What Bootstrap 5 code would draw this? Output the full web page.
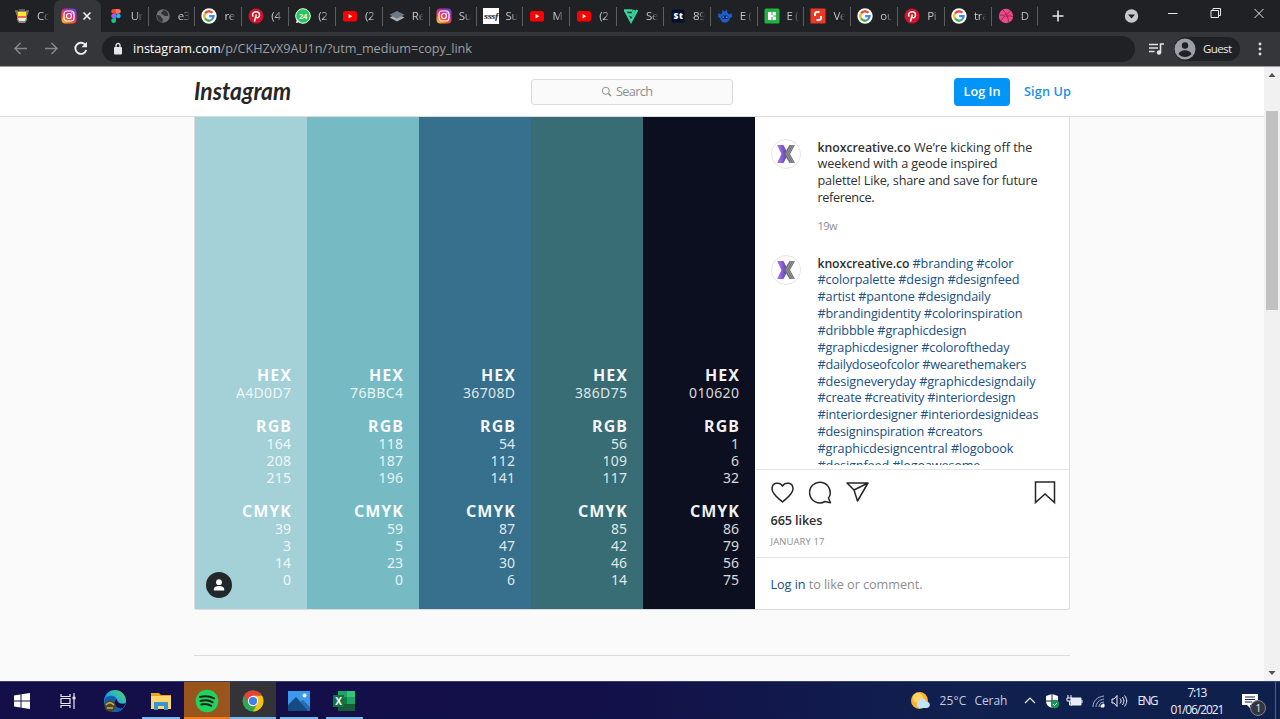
<!DOCTYPE html>
<html lang="en">
<head>
<meta charset="utf-8">
<title>Instagram</title>
<meta name="viewport" content="width=device-width, initial-scale=1">
<link rel="stylesheet" href="https://cdn.jsdelivr.net/npm/bootstrap@5.3.0/dist/css/bootstrap.min.css">
<style>
body{font-family:"Open Sans","Noto Sans",sans-serif;font-size:12.7px;color:#303030;width:1280px;height:719px;overflow:hidden;background:#fafafa}
svg{display:block;flex:none}
[data-fit]{white-space:nowrap;display:inline-block}
.tabstrip{height:32px;background:#202124;padding-left:7.6px;color:#c3c6ca;font-size:11.5px;letter-spacing:-.3px}
.tab{width:46.85px;height:32px;padding-left:6.5px;flex:none}
.tab .sep{width:1px;height:19px;background:#5c5e62;margin-left:-7px;margin-right:6px}
.tab .cut{width:12px;margin-left:7px;overflow:hidden;white-space:nowrap;-webkit-mask-image:linear-gradient(90deg,#000 45%,transparent)}
.tab.current{background:#35363a;border-radius:7px 7px 0 0}
.toolbar{height:34px;background:#35363a}
.omni{width:1033px;height:26px;border-radius:13px;background:#202124;color:#9aa0a6;font-size:12.7px;margin-left:12px;padding-left:13px}
.omni svg{margin:0 10px 0 -2px}
.queue{margin-left:13px}
.guest{width:66px;height:24px;border-radius:12px;background:#202124;color:#e8eaed;font-size:11.5px;margin-left:9px}
.viewport{height:615px;border-top:1px solid #9b9b9c}
.sheet{width:1264px}
.topnav{height:50px;background:#fff;border-bottom:1px solid #dbdbdb;padding-left:194px}
.searchbox{width:202px;height:26px;margin-left:240px;border:1px solid #dbdbdb;border-radius:3px;background:#fafafa;color:#8e8e8e;padding-right:10px}
.login{width:56px;height:28px;margin-left:221px;border-radius:4px;background:#0095f6;color:#fff;font-weight:600}
.signup{color:#1b8fe8;font-weight:600;margin-left:14px}
.post{width:876px;height:493px;margin-left:194px;border:1px solid #dbdbdb;border-top:0;border-radius:0 0 3px 3px;background:#fff}
.swatches{width:561px;height:492px;margin-left:-.5px}
.swatch{width:112px;flex:none;color:#fff;padding:249px 15.5px 0 0;text-align:right;line-height:17px;font-family:"Noto Sans","Open Sans",sans-serif;font-size:14px}
.swatch b{display:block;font-size:16px;font-weight:700;line-height:18px;color:#fffffff2}
.swatch div{color:#ffffffd9;margin-bottom:16px}
.tagged{width:26px;height:26px;left:11.5px;top:455px;background:#222829}
.comments{height:348px;overflow:hidden;padding-left:15px}
.lines{line-height:16.87px;margin-left:17px}
.lines .l{display:block;height:16.87px}
.lines b{font-weight:600;font-size:12.3px}
.lines .tags,.blue{color:#204f81}
.gray{color:#8e8e8e}
.rule{border-top:1px solid #e6e6e6}
.footerline{margin:45px 0 0 194px;width:876px;height:1px;background:#dbdbdb}
.scroller{width:16px;background:#f1f1f1}
.taskbar{height:38px;background:linear-gradient(90deg,#150f49 0,#130f48 45%,#10204f 75%,#10204c 100%);color:#eef;font-size:12px;border-top:1px solid #344070}
.task{width:45.8px;height:37px;flex:none}
.run::after{content:"";position:absolute;left:4px;right:4px;bottom:0;height:2px;background:#76b9ed}
.wide::after{left:0;right:0}
.orange::after{background:#f57c14}
.note{font-size:10px;width:16px;height:16px;right:-8px;bottom:-7px;background:#333640;border:1px solid #81858d;line-height:14px}
</style>
</head>
<body>
<svg width="0" height="0" class="position-absolute"><defs>
<linearGradient id="igg" x1="0.1" y1="1" x2=".8" y2="0"><stop offset="0" stop-color="#fec53a"/><stop offset=".35" stop-color="#f9532f"/><stop offset=".6" stop-color="#d52c8c"/><stop offset="1" stop-color="#6a3fd8"/></linearGradient>
<linearGradient id="edg" x1="0" y1="1" x2="1" y2="0"><stop offset="0" stop-color="#0c59b0"/><stop offset=".5" stop-color="#1ca9e0"/><stop offset="1" stop-color="#62d65a"/></linearGradient>
<linearGradient id="kx"><stop offset="0" stop-color="#b87be8"/><stop offset="1" stop-color="#4d3bb8"/></linearGradient>
<symbol id="ig" viewBox="0 0 16 16"><rect x=".5" y=".5" width="15" height="15" rx="4" fill="url(#igg)"/><rect x="3" y="3" width="10" height="10" rx="3" fill="none" stroke="#fff" stroke-width="1.200"/><circle cx="8" cy="8" r="2.500" fill="none" stroke="#fff" stroke-width="1.200"/><circle cx="11" cy="5" r=".7" fill="#fff"/></symbol>
<symbol id="yt" viewBox="0 0 16 16"><rect x="1" y="3" width="14" height="10.500" rx="2.600" fill="#f00"/><path d="M6.600 6v4.500l3.600-2.250z" fill="#fff"/></symbol>
<symbol id="gg" viewBox="0 0 16 16"><circle cx="8" cy="8" r="7.700" fill="#fff"/><g fill="none" stroke-width="2.200"><path d="M4 5.500A4.700 4.700 0 0 1 11.400 4.800" stroke="#ea4335"/><path d="M4 5.500a4.700 4.700 0 0 0 0 5" stroke="#fbbc05"/><path d="M4 10.500a4.700 4.700 0 0 0 7 1" stroke="#34a853"/><path d="M11 11.500a4.500 4.500 0 0 0 1.600-3.400H8.200" stroke="#4285f4"/></g></symbol>
<symbol id="pin" viewBox="0 0 16 16"><circle cx="8" cy="8" r="7.500" fill="#d3122b"/><path d="M6.400 13.500 8.300 6.500M5.200 8.600C3.500 6 5.600 3.700 8.200 3.700c4.500 0 4 6.100.9 6.100-.9 0-1.500-.5-1.600-1.100" fill="none" stroke="#fff" stroke-width="1.500"/></symbol>
<symbol id="cup" viewBox="0 0 16 16"><path d="M1 3h3M12 3h3M2 3l1 4M14 3l-1 4M5 2h6" stroke="#77736a" stroke-width="1.500" fill="none"/><path d="M3 3h10v9l-2 3H5l-2-3z" fill="#8c8773"/><path d="M4 4h8v4H4z" fill="#ffe629"/><path d="M4 8h8v2H4z" fill="#ef674e"/><path d="M4 10h8l-1 3H5z" fill="#e8efe4"/></symbol>
<symbol id="fig" viewBox="0 0 16 16"><path d="M8 1H5.500a2.300 2.300 0 0 0 0 4.700H8z" fill="#f24e1e"/><path d="M8 1h2.500a2.300 2.300 0 0 1 0 4.700H8z" fill="#ff7262"/><path d="M8 5.700H5.500a2.300 2.300 0 0 0 0 4.600H8z" fill="#a259ff"/><circle cx="10.400" cy="8" r="2.300" fill="#1abcfe"/><path d="M8 10.300H5.500A2.400 2.400 0 1 0 8 12.700z" fill="#0acf83"/></symbol>
<symbol id="globe" viewBox="0 0 16 16"><circle cx="8" cy="8" r="6.700" fill="#707276"/><path d="M2 7c3 0 4 1 4 2s2 1 2 3l-1 2C4 14 2 11 2 7M8 2c0 2-2 2-2 4 2 0 3 2 4 2h3c1-3-2-6-5-6" fill="#303236"/></symbol>
<symbol id="wa" viewBox="0 0 16 16"><circle cx="8" cy="8" r="7.300" fill="#25c95a" stroke="#f2fff4"/><path d="M1 15l1-4 3 3z" fill="#fff"/><text x="8" y="10.800" font-size="7.500" font-weight="700" text-anchor="middle" fill="#fff">24</text></symbol>
<symbol id="lay" viewBox="0 0 16 16"><path d="M.5 9.500 8 6l7.500 3.500L8 13.500z" fill="#aab0b4"/><path d="M.5 6.700 8 3l7.500 3.700L8 10.700z" fill="#6c7a86"/></symbol>
<symbol id="sss" viewBox="0 0 16 16"><path fill="#fff" d="M0 0h16v16H0z"/><path d="M1 8h14" stroke="#555" stroke-width=".6"/><text x="1" y="11" font-size="8.500" font-style="italic" font-weight="700" fill="#333" textLength="14" lengthAdjust="spacingAndGlyphs" font-family="Liberation Serif">sssf</text></symbol>
<symbol id="ft" viewBox="0 0 16 16" fill="none" stroke="#39d49c" stroke-width="2.300"><path d="M1 2.500h8.500M1.800 2 8 13.500 14.300 2M5 6.500h4.500M11.500 2 8 8.500"/></symbol>
<symbol id="st" viewBox="0 0 16 16"><rect x="1.500" y="1.500" width="13" height="13" rx="1.500" fill="#02102d"/><text x="8" y="11" font-size="8.500" font-weight="800" text-anchor="middle" fill="#fff" textLength="9">St</text></symbol>
<symbol id="bot" viewBox="0 0 16 16"><path d="M1.500 5 4 6.500 5.500 4 5 2l3 1.500L10 1.500V4l2 2.500L14.500 5l.5 4-2 1c-1 3-2 4.500-5 4.500S4 13 3 10L1 9z" fill="#1e5ed0"/><rect x="4.500" y="7.500" width="7" height="3.500" rx="1.700" fill="#0b2c66"/><circle cx="6.200" cy="9.200" r=".9" fill="#4e8bf0"/><circle cx="9.800" cy="9.200" r=".9" fill="#4e8bf0"/></symbol>
<symbol id="gr" viewBox="0 0 16 16"><rect x=".5" y=".5" width="15" height="15" rx="1.500" fill="#26b044"/><path d="M4 4h3.500v8H4zM8.500 4H12v3.500H8.500zM8.500 8.500H12V12H8.500zM7 7h2v2H7z" fill="#fff"/></symbol>
<symbol id="rd" viewBox="0 0 16 16"><path fill="#ef3824" d="M.5.5h15v15H.5z"/><path d="M9.500 4H7.200a2 2 0 0 0-2.200 2v2M6.500 12h2.300a2 2 0 0 0 2.200-2V8" fill="none" stroke="#fff" stroke-width="2"/></symbol>
<symbol id="dr" viewBox="0 0 16 16"><circle cx="8" cy="8" r="7.200" fill="#ea4c89"/><path d="M5 2c4 4 5 7 5.500 12M1.500 7c5 1 9-1 11-4M3 13c2-5 6-6 12-4.500" fill="none" stroke="#a81b53" stroke-width="1"/></symbol>
<symbol id="knox" viewBox="0 0 30 30"><circle cx="15" cy="15" r="14.500" fill="#fff" stroke="#e4e4e4"/><path d="M6 6h6.500L17 15l-4.500 9H6l4.500-9z" fill="url(#kx)"/><path d="M18.500 6H24l-5 9 5 9h-5.500L13 15z" fill="#6e6e73"/><path d="m20.500 6-5 9 5 9M22.500 6l-5 9 5 9" fill="none" stroke="#b5b5b8" stroke-width=".6"/></symbol>
</defs></svg>

<header>
  <div class="tabstrip d-flex align-items-center" id="tabs"></div>
  <div class="toolbar d-flex align-items-center">
    <svg width="90" height="34" viewBox="0 0 90 34" fill="none"><path d="M27 16.500H15m5.500-5.500L15 16.500l5.500 5.500M45 16.500h12m-5.500-5.500 5.500 5.500-5.500 5.500" stroke="#85878a" stroke-width="1.500"/><path d="M85.500 13a5.600 5.600 0 1 0 .8 5" stroke="#eceef0" stroke-width="1.900"/><path d="M87 9.800v5.500h-5.500z" fill="#eceef0"/></svg>
    <div class="omni d-flex align-items-center">
      <svg width="10" height="14" viewBox="0 0 10 14"><rect x="1" y="5" width="8" height="7.500" rx="1" fill="#e5e7ea"/><path d="M3 5V3.500a2 2 0 0 1 4 0V5" fill="none" stroke="#e5e7ea" stroke-width="1.300"/></svg>
      <span data-fit="339"><span class="text-white">instagram.com</span>/p/CKHZvX9AU1n/?utm_medium=copy_link</span>
    </div>
    <svg width="17" height="16" viewBox="0 0 17 16" class="queue"><path d="M1 3.500h9M1 7h9M1 10.500h5.500M12.500 11.500V3H16" stroke="#e2e4e7" stroke-width="1.600" fill="none"/><circle cx="11" cy="11.500" r="2.200" fill="#e2e4e7"/></svg>
    <div class="guest d-flex align-items-center"><svg width="22" height="22" viewBox="0 0 22 22"><circle cx="11" cy="11" r="10.500" fill="#9aa0a6"/><circle cx="11" cy="7.500" r="3.200" fill="#202124"/><path d="M4.500 16c2-5 11-5 13 0-3 4-10 4-13 0" fill="#202124"/></svg><span data-fit="29" style="margin-left:7px">Guest</span></div>
    <svg width="4" height="16" viewBox="0 0 4 16" fill="#dfe1e5" class="ms-auto" style="margin-right:18px"><circle cx="2" cy="3" r="1.400"/><circle cx="2" cy="8" r="1.400"/><circle cx="2" cy="13" r="1.400"/></svg>
  </div>
</header>

<div class="viewport d-flex">
  <main class="sheet">
    <nav class="topnav d-flex align-items-center">
      <svg width="97" height="34" viewBox="0 0 97 34"><text x="0" y="25" font-family="Lato" font-style="italic" font-weight="700" font-size="24" textLength="97" lengthAdjust="spacingAndGlyphs" fill="#262626">Instagram</text></svg>
      <div class="searchbox d-flex align-items-center justify-content-center"><svg width="11" height="11" viewBox="0 0 11 11" class="me-1" fill="none" stroke="#8e8e8e"><circle cx="4.800" cy="4.800" r="3.500"/><path d="m7.500 7.500 2.500 2.500" stroke-width="1.500"/></svg><span data-fit="37">Search</span></div>
      <div class="login d-flex align-items-center justify-content-center"><span data-fit="37">Log In</span></div>
      <span class="signup"><span data-fit="47">Sign Up</span></span>
    </nav>
    <article class="post d-flex">
      <div class="swatches d-flex position-relative" id="swatches"></div>
      <section class="flex-grow-1">
        <div class="comments">
          <div class="d-flex" style="padding-top:21.500px"><svg width="30" height="30"><use href="#knox"/></svg>
            <div class="lines"><span class="l"><span data-fit="215"><b>knoxcreative.co</b> We’re kicking off the</span></span><span class="l"><span data-fit="180">weekend with a geode inspired</span></span><span class="l"><span data-fit="220">palette! Like, share and save for future</span></span><span class="l"><span data-fit="57">reference.</span></span>
            <div class="gray" style="font-size:11px;margin-top:12px"><span data-fit="20">19w</span></div></div></div>
          <div class="d-flex" style="padding-top:19.800px"><svg width="30" height="30"><use href="#knox"/></svg><div class="lines" id="tags"></div></div>
        </div>
        <div class="rule d-flex" style="margin-top:4px;padding:10px 13px 0 15px"><svg width="100" height="26" viewBox="0 0 100 26" fill="none" stroke="#262626" stroke-width="1.500" stroke-linejoin="round"><path d="M11.500 22C8 18.500 1 14.500 1 8.800 1 2.700 8.500 1.300 11.500 6c3-4.700 10.500-3.300 10.500 2.800C22 14.500 15 18.500 11.500 22z"/><path d="M57.500 18.200A10.300 10.300 0 1 0 54 21.500l5.500 1.200z"/><path d="M76 3h21L86.500 21l-3.500-11zM83 10 97 3"/></svg>
        <svg width="22" height="26" viewBox="0 0 22 26" class="ms-auto" fill="none" stroke="#262626" stroke-width="1.500"><path d="M1.500 2h19v20.500L11 14l-9.500 8.500z"/></svg></div>
        <div style="padding:5px 0 0 15px;line-height:18px;font-weight:600"><span data-fit="52">665 likes</span></div>
        <div class="gray" style="padding:5px 0 0 15px;font-size:9.500px;line-height:16px;height:28px"><span data-fit="54">JANUARY 17</span></div>
        <div class="rule gray" style="padding:17px 0 0 15px;line-height:18px"><span data-fit="152"><span class="blue">Log in</span> to like or comment.</span></div>
      </section>
    </article>
    <div class="footerline"></div>
  </main>
  <aside class="scroller d-flex flex-column align-items-center"><svg width="16" height="614" viewBox="0 0 16 614"><path d="M4.500 10 8 6l3.500 4zM4.500 604h7L8 608z" fill="#505050"/><path fill="#c1c1c1" d="M2 44h12v199H2z"/></svg></aside>
</div>

<footer class="taskbar d-flex align-items-center">
  <div class="task d-flex align-items-center justify-content-center" style="margin-left:-1px"><svg width="16" height="16" viewBox="0 0 16 16" fill="#fff"><path d="M0 2.400 6.500 1.500v6H0zM7.500 1.300 16 0v7.500H7.500zM0 8.500h6.500v6L0 13.600zM7.500 8.500H16V16l-8.500-1.200z"/></svg></div>
  <div class="task d-flex align-items-center justify-content-center"><svg width="16" height="16" viewBox="0 0 16 16" fill="none" stroke="#e8e8f5" stroke-width="1.200"><path d="M1 1v2.500h9V1M1 15v-2.500h9V15M1 5.500h9v5H1zM14 0v16"/><path d="M12.500 5h3" stroke-width="2.500"/></svg></div>
  <div class="task d-flex align-items-center justify-content-center" style="margin-left:2px"><svg width="24" height="24" viewBox="0 0 24 24"><circle cx="12" cy="12" r="11" fill="url(#edg)"/><path d="M2 10C5 5 13 6 14 11c-3 2-2 6 3 6 3 0 5-1 6-3-3 9-11 10-15 8C3 20 1 16 2 10" fill="#135cac"/><path d="M12 15c-1-2 0-4 2-5 0 3 3 6 9 4l-3 5c-3 1-7 0-8-4" fill="#150f49"/><circle cx="7" cy="17" r="5.500" fill="#4b4a28"/><path d="M3 16c2-3 5-3 8 0M4 19h6" stroke="#c6ab50" stroke-width="1.500" fill="none"/></svg></div>
  <div class="task run position-relative d-flex align-items-center justify-content-center"><svg width="22" height="20" viewBox="0 0 22 20"><path d="M1 2h8l2 2h10v14H1z" fill="#e6a423"/><path d="M1 5h20v13H1z" fill="#ffd667"/><path d="M4 19v-8h14v8h-4v-4H8v4z" fill="#3993d4"/></svg></div>
  <div class="task run wide orange position-relative d-flex align-items-center justify-content-center" style="background:#9a551d"><svg width="24" height="24" viewBox="0 0 24 24"><circle cx="12" cy="12" r="11.300" fill="#1ed45f"/><path d="M5 8c5-1.500 10-.8 14 1.400M5.600 12c4.500-1.200 9-.7 12 1.300M6.300 15.500c4-1 7-.5 10 1.300" fill="none" stroke="#172017" stroke-width="2" stroke-linecap="round"/></svg></div>
  <div class="task run wide position-relative d-flex align-items-center justify-content-center" style="background:#343438"><svg width="22" height="22" viewBox="0 0 22 22"><circle cx="11" cy="11" r="10.500" fill="#2da94f"/><path d="M1.900 5.800A10.500 10.500 0 0 1 20.100 5.800H11L6.500 13.600z" fill="#e84235"/><path d="M20.100 5.800A10.500 10.500 0 0 1 11 21.500l4.500-7.900L11 5.800z" fill="#fbc116"/><circle cx="11" cy="11" r="5.200" fill="#fff"/><circle cx="11" cy="11" r="4.100" fill="#427fed"/></svg></div>
  <div class="task run position-relative d-flex align-items-center justify-content-center"><svg width="22" height="22" viewBox="0 0 22 22"><path fill="#3b9af0" d="M0 1h22v20H0z"/><path d="M0 15 8 7l13 14H0z" fill="#174982"/><path d="m12 12 3-2 7 7v4h-2z" fill="#246cb4"/><circle cx="16.500" cy="5.500" r="2" fill="#f4faff"/></svg></div>
  <div class="task run position-relative d-flex align-items-center justify-content-center"><svg width="24" height="22" viewBox="0 0 24 22"><path fill="#21a366" d="M6 1h17v20H6z"/><path fill="#33c481" d="M15 1h8v6h-8z"/><path fill="#107c41" d="M6 7h9v7H6z"/><path fill="#185c37" d="M6 14h17v7H6z"/><path fill="#107245" d="M1 5h11v12H1z"/><text x="6.500" y="14.500" font-size="10" font-weight="700" fill="#fff" text-anchor="middle">X</text></svg></div>
  <div class="d-flex align-items-center" style="margin-left:543px">
    <svg width="21" height="20" viewBox="0 0 21 20"><circle cx="9.500" cy="9.500" r="8.500" fill="#f9b331"/><circle cx="8" cy="7" r="5" fill="#ffd366"/><path d="M9 17a3.500 3.500 0 0 1 0-6.500c1-4 6-4 7 0 5 0 5 6 1 6.500z" fill="#c3e3fb"/></svg>
    <span data-fit="27" style="margin-left:8px;color:#c5cae0">25°C</span><span data-fit="33" style="margin-left:8px;color:#c5cae0">Cerah</span>
    <svg width="108" height="20" viewBox="0 0 108 20" style="margin-left:16px" fill="none" stroke="#f0f2ff"><path d="m2 12 5-5 5 5" stroke-width="1.200"/><path d="M29 3l6 2v5c0 4-3 6-6 7-3-1-6-3-6-7V5z" fill="#fff" stroke="none"/><path d="M29 3v14M23 10h12" stroke="#10204f"/><circle cx="32" cy="13" r="4.200" fill="#169553" stroke="none"/><path d="m30 13 1.500 1.500L34 12"/><path d="M48 7h10v7H48z" fill="#e8ebfa"/><path d="M59 9v3M45 4v3m3-3v3m-4 0h5v3h-5zM46.500 10v4H49"/><path d="M70 16C70 10 74 6 81 5M73 16c0-4 3-7 8-8M76 16c0-3 2-5 5-5" stroke="#a9b3d0"/><path d="M78 16c0-2 1-3 3-3v3z" fill="#fff"/><path d="M89 8h2l3-3.500v11L91 12h-2zM97 7.500c1.500 2 1.500 3 0 5M99.300 6c2.200 3 2.200 5 0 8M101.500 4.500c3 4 3 7 0 11"/></svg>
    <span data-fit="21" style="margin-left:6px">ENG</span>
    <div class="text-center" style="width:54px;margin-left:12px;line-height:17px"><div><span data-fit="20">7:13</span></div><div><span data-fit="54">01/06/2021</span></div></div>
    <div class="position-relative" style="margin-left:18px"><svg width="16" height="16" viewBox="0 0 16 16"><path d="M0 1h16v11H8v3l-3-3H0z" fill="#fff"/><path d="M3 4h10M3 6.500h10M3 9h7" stroke="#10204f"/></svg><span class="note position-absolute rounded-circle text-center">1</span></div>
    <div style="width:1px;height:37px;background:#52608a;margin-left:17px"></div>
  </div>
</footer>
<script src="https://cdn.jsdelivr.net/npm/bootstrap@5.3.0/dist/js/bootstrap.bundle.min.js"></script>
<script>
const tabs=[['cup','Co'],['ig',''],['fig','Un'],['globe','e3'],['gg','re'],['pin','(4'],['wa','(2'],['yt','(2'],['lay','Re'],['ig','Su'],['sss','Su'],['yt','M'],['yt','(2'],['ft','Se'],['st','89'],['bot','E ('],['gr','E ('],['rd','Ve'],['gg','ou'],['pin','Pi'],['gg','tra'],['dr','D']];
document.getElementById('tabs').innerHTML=tabs.map(([icon,label],i)=>`<div class="tab d-flex align-items-center ${i==1?'current':''}">${i>2?'<i class="sep"></i>':''}<svg width="16" height="16"><use href="#${icon}"/></svg>${i==1?'<svg width="10" height="10" viewBox="0 0 10 10" style="margin-left:5px"><path d="m1.500 1.500 7 7m0-7-7 7" stroke="#f1f3f4" stroke-width="1.600"/></svg>':`<span class="cut">${label}</span>`}</div>`).join('')+
`<svg width="235" height="32" viewBox="0 0 235 32" fill="none" stroke="#e4e6e9" style="margin-left:-1px"><path d="M.5 6.500v19" stroke="#5c5e62"/><path d="M15.500 16h11M21 10.500v11" stroke-width="1.600"/><circle cx="94.500" cy="16" r="6.700" fill="#c5c8cd" stroke="none"/><path d="M91 14.500h7L94.500 18.500z" fill="#202124" stroke="none"/><path d="M131 13.500h9.500M174 10.500h7.500v7H174zM176 10.500v-2h7.500v7h-2M217.500 9l9 9m0-9-9 9"/></svg>`;
const palette=[['#a4d0d7','A4D0D7',[164,208,215],[39,3,14,0],55],['#76bbc4','76BBC4',[118,187,196],[59,5,23,0],53],['#36708d','36708D',[54,112,141],[87,47,30,6],52],['#386d75','386D75',[56,109,117],[85,42,46,14],52],['#0b0f1f','010620',[1,6,32],[86,79,56,75],50]];
document.getElementById('swatches').innerHTML=palette.map(([c,hex,rgb,cmyk,w])=>`<div class="swatch" style="background:${c}"><b><span data-fit="34">HEX</span></b><div><span data-fit="${w}">${hex}</span></div><b><span data-fit="35">RGB</span></b><div>${rgb.map(n=>`<span data-fit="${String(n).length*8.500-1}">${n}</span>`).join('<br>')}</div><b><span data-fit="49">CMYK</span></b><div>${cmyk.map(n=>`<span data-fit="${String(n).length*8.500-1}">${n}</span>`).join('<br>')}</div></div>`).join('')+
'<div class="tagged rounded-circle position-absolute d-flex align-items-center justify-content-center"><svg width="12" height="12" viewBox="0 0 12 12" fill="#fff"><circle cx="6" cy="3.200" r="2.900"/><path d="M.8 11.500v-1.500c0-4 10.400-4 10.400 0v1.500z"/></svg></div>';
const tags=[['#branding #color',196],['#colorpalette #design #designfeed',202],['#artist #pantone #designdaily',173],['#brandingidentity #colorinspiration',205],['#dribbble #graphicdesign',149],['#graphicdesigner #coloroftheday',192],['#dailydoseofcolor #wearethemakers',209],['#designeveryday #graphicdesigndaily',218],['#create #creativity #interiordesign',198],['#interiordesigner #interiordesignideas',221],['#designinspiration #creators',165],['#graphicdesigncentral #logobook',196],['#designfeed #logoawesome',163]];
document.getElementById('tags').innerHTML=tags.map(([t,w],i)=>`<span class="l"><span data-fit="${w}">${i?'':'<b>knoxcreative.co</b> '}<span class="tags">${t}</span></span></span>`).join('');
// Track each label so that it fills its intended width.
document.querySelectorAll('[data-fit]').forEach(el=>{
  const n=el.textContent.length, extra=(el.dataset.fit-el.getBoundingClientRect().width)/Math.max(n-1,1);
  if(n>1){el.style.letterSpacing=extra+'px';el.style.marginRight=-extra+'px';}
});
</script>
</body>
</html>
